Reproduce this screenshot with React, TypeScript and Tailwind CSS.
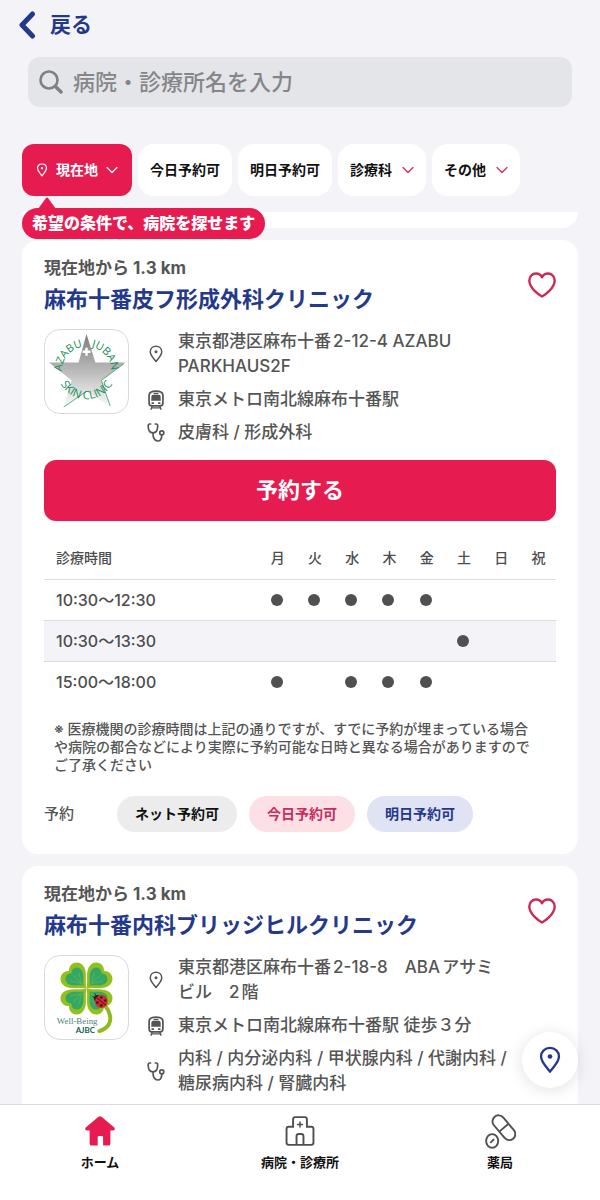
import { useState, type ReactNode } from "react";

const DAYS = ["月", "火", "水", "木", "金", "土", "日", "祝"];

interface Hours {
  time: string;
  open: string[];
}

interface Clinic {
  id: string;
  distance: string;
  name: string;
  address: string;
  station: string;
  departments: string;
  logo: ReactNode;
  hours: Hours[];
}

function PinIcon({ className = "" }: { className?: string }) {
  return (
    <svg viewBox="0 0 28 36" fill="none" stroke="currentColor" strokeWidth="3" className={className} aria-hidden="true">
      <path d="M14 33C10 27 2.5 21 2.5 13.5C2.5 7 7.500 2.500 14 2.500S25.500 7 25.500 13.500C25.500 21 18 27 14 33Z" strokeLinejoin="round" />
      <circle cx="14" cy="13.500" r="3" fill="currentColor" stroke="none" />
    </svg>
  );
}

function ChevronDown({ className = "" }: { className?: string }) {
  return (
    <svg viewBox="0 0 12 8" fill="none" stroke="currentColor" strokeWidth="1.2" strokeLinecap="round" strokeLinejoin="round" className={className} aria-hidden="true">
      <path d="M1 1.500L6 6.500L11 1.500" />
    </svg>
  );
}

function TrainIcon() {
  return (
    <svg viewBox="0 0 46 58" fill="none" stroke="currentColor" strokeWidth="5" className="h-5 w-4" aria-hidden="true">
      <path d="M3 14Q4 3 23 3Q42 3 43 14V38Q43 46 35 46H11Q3 46 3 38Z" />
      <path d="M16 10H30" strokeWidth="4" />
      <path d="M10 18Q11 14 15 14H31Q35 14 36 18L37 31H9Z" fill="currentColor" stroke="none" />
      <path d="M10 38H17M29 38H36" strokeWidth="5" />
      <path d="M12 46L8 57M34 46L38 57M10 52H36" strokeWidth="4" />
    </svg>
  );
}

function StethoscopeIcon() {
  return (
    <svg viewBox="0 0 52 56" fill="none" stroke="currentColor" strokeWidth="5" strokeLinecap="round" className="h-[19px] w-[18px]" aria-hidden="true">
      <path d="M10 3H7Q3 3 3 9C3 22 8 29 17 29C26 29 31 22 31 9Q31 3 27 3H24" />
      <path d="M17 29C17 44 21 53 31 53C39 53 43 47 43 35" />
      <circle cx="43" cy="29" r="6" />
    </svg>
  );
}

function HeartIcon() {
  return (
    <svg viewBox="0 0 28 26" fill="none" stroke="currentColor" strokeWidth="2.400" strokeLinejoin="round" className="h-[26px] w-7" aria-hidden="true">
      <path d="M14 24.500C12 23.500 1.300 16.500 1.300 8.500C1.300 4.500 4.300 1.500 8 1.500C10.700 1.500 13 3 14 5.300C15 3 17.300 1.500 20 1.500C23.700 1.500 26.700 4.500 26.700 8.500C26.700 16.500 16 23.500 14 24.500Z" />
    </svg>
  );
}

function SkinClinicLogo() {
  return (
    <svg viewBox="0 0 84 84" className="h-full w-full" role="img" aria-label="Azabu Juban Skin Clinic">
      <defs>
        <linearGradient id="star" x1="0" y1="0" x2="0" y2="1">
          <stop offset="0" stopColor="#7d7d7f" />
          <stop offset="0.500" stopColor="#b9b9ba" />
          <stop offset="1" stopColor="#fbfbfb" />
        </linearGradient>
        <path id="arc-left" d="M17 42A25 25 0 0 1 38 17" />
        <path id="arc-right" d="M46 17A25 25 0 0 1 67 42" />
        <path id="arc-bottom" d="M12 40A30 30 0 0 0 72 40" />
      </defs>
      <path d="M42 4L51 33H81L57 51L66 78L42 62L19 78L27 51L4 33H34Z" fill="url(#star)" />
      <path d="M80 34L57 51L66 77M42 62L19 78" fill="none" stroke="#2f9a69" strokeWidth="0.800" />
      <path d="M42 18V26M38 22H46" stroke="#fff" strokeWidth="2.500" />
      <g fill="#149055" fontSize="11" textAnchor="middle" className="font-['Liberation_Sans_Narrow','Open_Sans',sans-serif]">
        <text><textPath href="#arc-left" startOffset="50%">AZABU</textPath></text>
        <text><textPath href="#arc-right" startOffset="50%">JUBAN</textPath></text>
      </g>
      <text fill="#149055" fontSize="11.500" textAnchor="middle" className="font-['Open_Sans',sans-serif]">
        <textPath href="#arc-bottom" startOffset="50%">SKIN CLINIC</textPath>
      </text>
    </svg>
  );
}

const LEAF = "M0 0C-4-7-14-11-14-20C-14-27-5-31 0-25C5-31 14-27 14-20C14-11 4-7 0 0Z";

function CloverLogo() {
  return (
    <svg viewBox="0 0 84 84" className="h-full w-full" role="img" aria-label="Well-Being AJBC">
      <path d="M50 42C66 50 74 70 55 76" fill="none" stroke="#8fbc1c" strokeWidth="4" strokeLinecap="round" />
      {[-45, 45, 135, 225].map((angle) => (
        <g key={angle} transform={`translate(42 33) rotate(${angle})`}>
          <path d={LEAF} fill="#93c01f" />
          <path d={LEAF} fill="#35a765" transform="translate(0 -4) scale(0.700)" />
          <path d="M-6-17L0-7L6-17M0-5V-19" fill="none" stroke="#5fb55a" strokeWidth="0.800" />
        </g>
      ))}
      <path d="M48 41L52 43M50 38L53 41" stroke="#222" strokeWidth="1" />
      <circle cx="53" cy="43" r="3.500" fill="#222" />
      <circle cx="57" cy="46" r="6.500" fill="#dc2430" />
      <path d="M52 42L62 50" stroke="#222" strokeWidth="1" />
      <g fill="#222">
        <circle cx="57" cy="42" r="1.300" />
        <circle cx="61" cy="45" r="1.300" />
        <circle cx="53" cy="47" r="1.300" />
        <circle cx="57" cy="50" r="1.300" />
      </g>
      <text x="12" y="69" fontSize="9" fill="#4c8479" className="font-['Liberation_Serif',serif]">Well-Being</text>
      <text x="31" y="78" fontSize="8" fill="#155c4a" className="font-['Lato',sans-serif] font-bold">AJBC</text>
    </svg>
  );
}

const CLINICS: Clinic[] = [
  {
    id: "skin",
    distance: "1.3 km",
    name: "麻布十番皮フ形成外科クリニック",
    address: "東京都港区麻布十番2-12-4 AZABU PARKHAUS2F",
    station: "東京メトロ南北線麻布十番駅",
    departments: "皮膚科 / 形成外科",
    logo: <SkinClinicLogo />,
    hours: [
      { time: "10:30〜12:30", open: ["月", "火", "水", "木", "金"] },
      { time: "10:30〜13:30", open: ["土"] },
      { time: "15:00〜18:00", open: ["月", "水", "木", "金"] },
    ],
  },
  {
    id: "bridge-hill",
    distance: "1.3 km",
    name: "麻布十番内科ブリッジヒルクリニック",
    address: "東京都港区麻布十番2-18-8　ABAアサミビル　2階",
    station: "東京メトロ南北線麻布十番駅 徒歩３分",
    departments: "内科 / 内分泌内科 / 甲状腺内科 / 代謝内科 / 糖尿病内科 / 腎臓内科",
    logo: <CloverLogo />,
    hours: [],
  },
];

function InfoRow({ icon, children }: { icon: ReactNode; children: ReactNode }) {
  return (
    <li className="flex items-center gap-3">
      <span className="flex w-5 shrink-0 justify-center">{icon}</span>
      <span>{children}</span>
    </li>
  );
}

function HoursTable({ hours }: { hours: Hours[] }) {
  return (
    <table className="mt-[17px] w-full table-fixed border-collapse text-[#4d4d4f]">
      <thead>
        <tr className="h-[41px] border-b border-[#dcdcde] text-sm">
          <th scope="col" className="w-[214px] pl-3 text-left font-medium">診療時間</th>
          {DAYS.map((day) => (
            <th key={day} scope="col" className="p-0 pl-0.5 text-center font-medium">{day}</th>
          ))}
        </tr>
      </thead>
      <tbody>
        {hours.map((row) => (
          <tr key={row.time} className="h-[41px] border-b border-[#dcdcde] last:border-b-0 even:bg-[#f4f4f8]">
            <th scope="row" className="pl-3 text-left text-base font-medium">{row.time}</th>
            {DAYS.map((day) => (
              <td key={day} className="p-0">
                {row.open.includes(day) && <span className="mx-auto block size-3 rounded-full bg-[#505052]" />}
              </td>
            ))}
          </tr>
        ))}
      </tbody>
    </table>
  );
}

// Opening hours, booking button and availability badges
function Booking({ hours }: { hours: Hours[] }) {
  return (
    <>
      <button type="button" className="mt-[15px] h-[61px] w-full rounded-xl bg-[#e61c50] text-[22px] font-bold text-white">
        予約する
      </button>

      <HoursTable hours={hours} />

      <p className="mt-[18px] pr-4 pl-[10px] text-sm leading-[18px] font-medium text-[#555]">
        ※ 医療機関の診療時間は上記の通りですが、すでに予約が埋まっている場合や病院の都合などにより実際に予約可能な日時と異なる場合がありますのでご了承ください
      </p>

      <div className="mt-[22px] flex items-center gap-3">
        <span className="w-[61px] text-[15px] font-medium text-[#555]">予約</span>
        <span className="rounded-full bg-[#ececed] px-[18px] py-2 text-sm font-bold text-[#111]">ネット予約可</span>
        <span className="rounded-full bg-[#fddfe6] px-[18px] py-2 text-sm font-bold text-[#c92c5d]">今日予約可</span>
        <span className="rounded-full bg-[#dfe3f4] px-[18px] py-2 text-sm font-bold text-[#24398a]">明日予約可</span>
      </div>
    </>
  );
}

function ClinicCard({ clinic }: { clinic: Clinic }) {
  const [liked, setLiked] = useState(false);

  return (
    <article className="shrink-0 rounded-2xl bg-white px-[22px] pt-4 pb-[22px]">
      <div className="flex items-center justify-between">
        <div>
          <p className="text-[17px] leading-6 font-bold text-[#555]">現在地から {clinic.distance}</p>
          <h2 className="mt-1 text-[22px] leading-[30px] font-bold text-[#24398a]">{clinic.name}</h2>
        </div>
        <button
          type="button"
          aria-label="お気に入り"
          aria-pressed={liked}
          onClick={() => setLiked(!liked)}
          className="text-[#cb2a55]"
        >
          <HeartIcon />
        </button>
      </div>

      <div className="mt-[15px] flex items-start gap-[17px]">
        <div className="size-[85px] shrink-0 overflow-hidden rounded-2xl border border-[#d9d9dc]">{clinic.logo}</div>
        <ul className="flex flex-1 flex-col gap-2 pr-12 text-[17px] leading-[25px] font-medium text-[#555] [text-autospace:normal]">
          <InfoRow icon={<PinIcon className="h-[18px] w-[14px]" />}>{clinic.address}</InfoRow>
          <InfoRow icon={<TrainIcon />}>{clinic.station}</InfoRow>
          <InfoRow icon={<StethoscopeIcon />}>{clinic.departments}</InfoRow>
        </ul>
      </div>

      {clinic.hours.length > 0 && <Booking hours={clinic.hours} />}
    </article>
  );
}

function HomeIcon() {
  return (
    <svg viewBox="0 0 78 78" fill="currentColor" className="h-[30px] w-[30px] text-[#e61c50]" aria-hidden="true">
      <path d="M35 2Q39-1 43 2L76 30Q78 32 77 36Q76 38 73 38H66V72Q66 77 61 77H47V55Q47 52 44 52H36Q33 52 33 55V77H17Q12 77 12 72V38H5Q2 38 1 36Q0 32 2 30Z" />
    </svg>
  );
}

function HospitalIcon() {
  return (
    <svg viewBox="0 0 76 78" fill="none" stroke="currentColor" strokeWidth="5" className="h-[30px] w-[30px] text-[#505052]" aria-hidden="true">
      <path d="M20 28V9Q20 3 26 3H50Q56 3 56 9V28H67Q73 28 73 34V69Q73 75 67 75H9Q3 75 3 69V34Q3 28 9 28Z" />
      <path d="M38 14V30M30 22H46" strokeWidth="4" />
      <path d="M29 75V53Q29 47 35 47H41Q47 47 47 53V75" />
    </svg>
  );
}

function PillsIcon() {
  return (
    <svg viewBox="0 0 82 92" fill="none" stroke="currentColor" strokeWidth="5" className="h-[35px] w-[31px] text-[#505052]" aria-hidden="true">
      <g transform="translate(50 36) rotate(50)">
        <rect x="-38" y="-16" width="76" height="32" rx="16" />
        <path d="M0-16V16" />
      </g>
      <ellipse cx="19" cy="71" rx="16" ry="18" />
      <path d="M14 76L24 66" />
    </svg>
  );
}

const TABS = [
  { label: "ホーム", icon: <HomeIcon /> },
  { label: "病院・診療所", icon: <HospitalIcon /> },
  { label: "薬局", icon: <PillsIcon /> },
];

const CHIP = "flex h-[52px] items-center rounded-2xl bg-white px-3 text-sm font-bold text-[#111]";

export default function App() {
  return (
    <div className="flex h-screen flex-col bg-[#f4f4f8] font-['Inter','Noto_Sans_CJK_JP',sans-serif]">
      <header className="shrink-0">
        <div className="flex h-[57px] items-start px-[18px] pt-[10px]">
          <a href="#" className="flex items-center gap-[14px] text-[21px] leading-[30px] font-bold text-[#24398a]">
            <svg viewBox="0 0 18 28" fill="none" stroke="currentColor" strokeWidth="5" strokeLinecap="round" strokeLinejoin="round" className="h-7 w-[18px]" aria-hidden="true">
              <path d="M14.500 3L4 14L14.500 25" />
            </svg>
            戻る
          </a>
        </div>

        <label className="mx-7 flex h-[50px] items-center gap-[10px] rounded-xl bg-[#e4e5e8] px-[11px]">
          <svg viewBox="0 0 24 24" fill="none" stroke="#808084" strokeWidth="2.600" strokeLinecap="round" className="size-6 shrink-0" aria-hidden="true">
            <circle cx="10" cy="10" r="8.500" />
            <path d="M16.500 16.500L22 22" strokeWidth="3.500" />
          </svg>
          <input
            type="search"
            aria-label="病院・診療所名"
            placeholder="病院・診療所名を入力"
            className="min-w-0 flex-1 bg-transparent text-[22px] font-medium text-[#333] outline-none placeholder:text-[#868689]"
          />
        </label>

        <div className="mt-[37px] flex gap-[6px] px-[22px]">
          <div className="relative">
            <button type="button" className="flex h-[52px] items-center gap-2 rounded-xl bg-[#e61c50] px-[14px] text-sm font-bold text-white">
              <PinIcon className="h-[14px] w-3" />
              現在地
              <ChevronDown className="h-2 w-3" />
            </button>
            {/* Hint bubble hanging under the location filter */}
            <div className="absolute top-full left-0 z-10 pt-3">
              <svg viewBox="0 0 18 12" className="absolute top-px left-4 h-3 w-[18px] fill-[#e61c50]" aria-hidden="true">
                <path d="M0 12L8 1Q9 0 10 1L18 12Z" />
              </svg>
              <p className="rounded-full bg-[#e61c50] px-[10px] text-base leading-[31px] font-black whitespace-nowrap text-white">
                希望の条件で、病院を探せます
              </p>
            </div>
          </div>
          <button type="button" className={CHIP}>今日予約可</button>
          <button type="button" className={CHIP}>明日予約可</button>
          <button type="button" className={`${CHIP} gap-[10px]`}>
            診療科
            <ChevronDown className="h-2 w-3 text-[#c92c5d]" />
          </button>
          <button type="button" className={`${CHIP} gap-[10px]`}>
            その他
            <ChevronDown className="h-2 w-3 text-[#c92c5d]" />
          </button>
        </div>
      </header>

      <div className="relative mt-4 min-h-0 flex-1">
        <main className="flex h-full flex-col gap-3 overflow-y-auto px-[22px] [scrollbar-width:none]">
          <div className="h-4 shrink-0 rounded-b-2xl bg-white" />
          {CLINICS.map((clinic) => (
            <ClinicCard key={clinic.id} clinic={clinic} />
          ))}
        </main>
        <button
          type="button"
          aria-label="地図で見る"
          className="absolute right-[22px] bottom-4 flex size-14 items-center justify-center rounded-full bg-white text-[#24398a] shadow-[0_2px_16px_rgba(0,0,0,0.12)]"
        >
          <PinIcon className="h-7 w-[22px]" />
        </button>
      </div>

      <nav className="grid h-24 shrink-0 grid-cols-3 border-t border-[#dcdce0] bg-white">
        {TABS.map((tab) => (
          <a key={tab.label} href="#" className="flex flex-col items-center pt-2 text-[13px] leading-5 font-bold text-[#111]">
            <span className="flex h-9 items-center">{tab.icon}</span>
            <span className="mt-[3px]">{tab.label}</span>
          </a>
        ))}
      </nav>
    </div>
  );
}
